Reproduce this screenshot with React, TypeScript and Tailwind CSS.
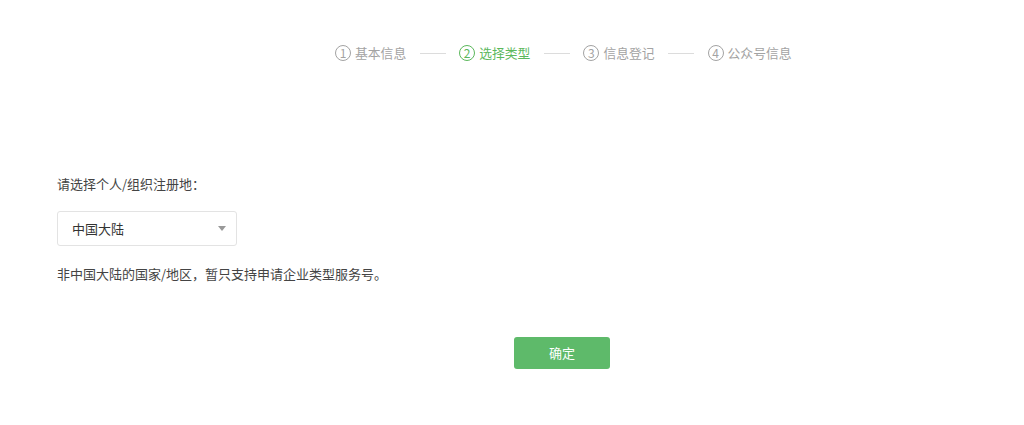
const steps = [
  { n: "1", label: "基本信息" },
  { n: "2", label: "选择类型", active: true },
  { n: "3", label: "信息登记" },
  { n: "4", label: "公众号信息" },
];

function Step({ n, label, active }: { n: string; label: string; active?: boolean }) {
  return (
    <div className={`flex items-center gap-[4px] ${active ? "text-[#5cb85c]" : "text-[#a3a3a3]"}`}>
      <span
        className={`w-[16px] h-[16px] rounded-full border flex items-center justify-center text-[12px] leading-none ${
          active ? "border-[#5cb85c]" : "border-[#a3a3a3]"
        }`}
      >
        {n}
      </span>
      <span className="text-[12.8px]">{label}</span>
    </div>
  );
}

export default function App() {
  return (
    <div
      className="w-[1024px] h-[425px] bg-white text-[#333]"
      style={{ fontFamily: '"Noto Sans CJK SC", "Noto Sans", sans-serif' }}
    >
      {/* steps */}
      <div className="flex items-center pt-[44px] pl-[335px] h-[62px]">
        {steps.map((s, i) => (
          <div key={s.n} className="flex items-center">
            <Step {...s} />
            {i !== steps.length - 1 && <span className="mx-[13.5px] w-[26px] h-px bg-[#dcdcdc]"></span>}
          </div>
        ))}
      </div>

      <div className="pl-[57px] pt-[112px]">
        <p className="text-[13px] leading-[20px] text-[#444]">请选择个人/组织注册地：</p>

        <div className="mt-[17px] w-[180px] h-[35px] border border-[#e3e3e3] rounded-[3px] flex items-center justify-between pl-[14px] pr-[10px]">
          <span className="text-[13px] text-[#333]">中国大陆</span>
          <span className="w-0 h-0 border-l-[4px] border-r-[4px] border-t-[5px] border-l-transparent border-r-transparent border-t-[#999]"></span>
        </div>

        <p className="mt-[18px] text-[13px] leading-[20px] text-[#444]">
          非中国大陆的国家/地区，暂只支持申请企业类型服务号。
        </p>
      </div>

      <div className="flex pl-[514px] mt-[53px]">
        <button className="w-[96px] h-[32px] rounded-[3px] bg-[#5eba6a] text-white text-[13px]">确定</button>
      </div>
    </div>
  );
}
